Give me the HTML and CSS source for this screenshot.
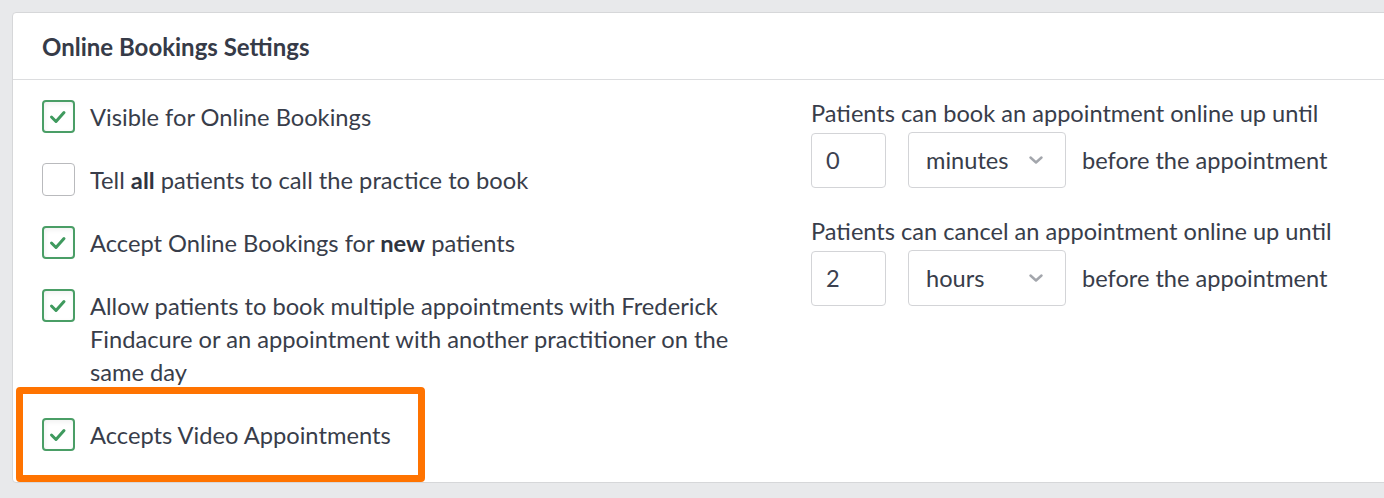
FILE: index.html
```html
<!DOCTYPE html>
<html>
<head>
<meta charset="utf-8">
<link rel="stylesheet" href="styles.css">
</head>
<body>
<div class="card">
  <div class="card-header">Online Bookings Settings</div>
  <div class="card-body">
    <div class="col-left">
      <div class="check-row">
        <span class="box checked"><svg viewBox="0 0 32 32" width="32" height="32"><polyline points="9.5,17 14,21.5 22,12.5" /></svg></span>
        <span class="label">Visible for Online Bookings</span>
      </div>
      <div class="check-row">
        <span class="box"></span>
        <span class="label">Tell <b>all</b> patients to call the practice to book</span>
      </div>
      <div class="check-row">
        <span class="box checked"><svg viewBox="0 0 32 32" width="32" height="32"><polyline points="9.5,17 14,21.5 22,12.5" /></svg></span>
        <span class="label">Accept Online Bookings for <b>new</b> patients</span>
      </div>
      <div class="check-row">
        <span class="box checked"><svg viewBox="0 0 32 32" width="32" height="32"><polyline points="9.5,17 14,21.5 22,12.5" /></svg></span>
        <span class="label">Allow patients to book multiple appointments with Frederick Findacure or an appointment with another practitioner on the same day</span>
      </div>
      <div class="check-row highlighted">
        <span class="box checked"><svg viewBox="0 0 32 32" width="32" height="32"><polyline points="9.5,17 14,21.5 22,12.5" /></svg></span>
        <span class="label">Accepts Video Appointments</span>
        <span class="highlight"></span>
      </div>
    </div>
    <div class="col-right">
      <div class="field">
        <div class="field-label">Patients can book an appointment online up until</div>
        <div class="field-controls">
          <span class="num-input">0</span>
          <span class="select">minutes<svg class="chev" viewBox="0 0 14 8" width="14" height="8"><polyline points="1.5,1.5 7,6.5 12.5,1.5"/></svg></span>
          <span class="suffix">before the appointment</span>
        </div>
      </div>
      <div class="field">
        <div class="field-label">Patients can cancel an appointment online up until</div>
        <div class="field-controls">
          <span class="num-input">2</span>
          <span class="select">hours<svg class="chev" viewBox="0 0 14 8" width="14" height="8"><polyline points="1.5,1.5 7,6.5 12.5,1.5"/></svg></span>
          <span class="suffix">before the appointment</span>
        </div>
      </div>
    </div>
  </div>
</div>
</body>
</html>
```

FILE: styles.css
```css
html, body {
  margin: 0;
  padding: 0;
}
body {
  background: #e8e9eb;
  font-family: Lato, "Open Sans", sans-serif;
  color: #383d4a;
  overflow: hidden;
  height: 498px;
}
.card {
  margin: 12px -20px 0 12px;
  background: #ffffff;
  border: 1px solid #d6d7d9;
  border-radius: 4px;
  height: 471px;
  box-sizing: border-box;
}
.card-header {
  height: 67px;
  box-sizing: border-box;
  border-bottom: 1px solid #dcdddf;
  padding: 19px 0 0 29px;
  font-size: 24px;
  font-weight: 700;
  line-height: 30px;
  color: #363b48;
}
.card-body {
  display: flex;
  padding: 20px 0 0 29px;
}
.col-left {
  width: 700px;
  display: flex;
  flex-direction: column;
  gap: 30px;
}
.check-row {
  display: flex;
  align-items: flex-start;
  gap: 15px;
  font-size: 23.7px;
  line-height: 33px;
  position: relative;
}
.label {
  position: relative;
  top: 1px;
}
.box {
  flex: 0 0 auto;
  width: 33px;
  height: 33px;
  box-sizing: border-box;
  border: 1px solid #b9babd;
  border-radius: 4px;
  background: #fff;
  position: relative;
}
.box.checked {
  border: 2.5px solid #4a9e66;
  box-shadow: inset 1px 2px 5px rgba(0,0,0,0.06);
}
.box svg {
  position: absolute;
  left: -2px;
  top: -2px;
}
.box svg polyline {
  fill: none;
  stroke: #3f9a5e;
  stroke-width: 3;
  stroke-linecap: round;
  stroke-linejoin: round;
}
.label b {
  font-weight: 700;
  color: #2f3440;
}
.highlight {
  position: absolute;
  left: -26px;
  top: -31px;
  width: 409px;
  height: 95px;
  box-sizing: border-box;
  border: 7px solid #ff7300;
  border-radius: 4px;
}
.col-right {
  margin-left: 69px;
  display: flex;
  flex-direction: column;
  gap: 30px;
}
.field-label {
  font-size: 23.6px;
  line-height: 33px;
  margin-top: -3px;
}
.field-controls {
  display: flex;
  align-items: center;
  margin-top: 2px;
  font-size: 23.6px;
}
.num-input {
  width: 75px;
  height: 55px;
  box-sizing: border-box;
  border: 1px solid #d3d4d7;
  border-radius: 4px;
  padding-left: 14px;
  display: flex;
  align-items: center;
  color: #3c4150;
}
.select {
  margin-left: 22px;
  width: 158px;
  height: 56px;
  box-sizing: border-box;
  border: 1px solid #d3d4d7;
  border-radius: 4px;
  padding: 0 22px 0 17px;
  display: flex;
  align-items: center;
  justify-content: space-between;
}
.chev polyline {
  fill: none;
  stroke: #a3a6ac;
  stroke-width: 2.4;
  stroke-linecap: round;
  stroke-linejoin: round;
}
.suffix {
  margin-left: 16px;
}
```
